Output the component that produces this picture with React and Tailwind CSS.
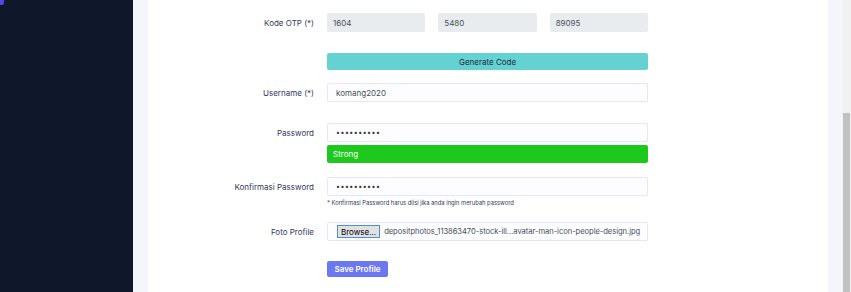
const FONT = "font-['Inter','Liberation_Sans',sans-serif]"

function Row({ label, className = '', children }) {
  return (
    <div className={`flex items-start ${className}`}>
      <div className="flex h-[19px] w-[166px] shrink-0 items-center justify-end text-[8px] text-[#34395e]">{label}</div>
      <div className="ml-[13px] w-[321px]">{children}</div>
    </div>
  )
}

function TextBox({ value, dots }) {
  return (
    <div className="flex h-[19px] items-center rounded-[2px] border border-[#e4e6fc] bg-[#fdfdff] pl-[8px] text-[8px] text-[#495057]">
      {dots ? <span className="text-[7px] leading-none tracking-[0.5px] text-[#333]">{value}</span> : value}
    </div>
  )
}

export default function App() {
  return (
    <div className={`flex h-[292px] w-[851px] overflow-hidden ${FONT}`}>
      {/* sidebar */}
      <div className="relative w-[133px] shrink-0 bg-[#0f172a]">
        <div className="absolute left-0 top-0 h-[5px] w-[4px] rounded-br-[2px] bg-[#4f46e5]" />
      </div>

      {/* main */}
      <div className="flex flex-1 bg-[#f4f6f9] pl-[15px] pr-[14px]">
        <div className="flex-1 bg-white pt-[13px]">
          <Row label="Kode OTP (*)">
            <div className="flex gap-[13px]">
              {['1604', '5480', '89095'].map((c) => (
                <div key={c} className="flex h-[19px] flex-1 items-center rounded-[2px] bg-[#e9ecef] pl-[6px] text-[8px] text-[#495057]">
                  {c}
                </div>
              ))}
            </div>
          </Row>

          <Row label="" className="mt-[21px]">
            <div className="flex h-[17px] items-center justify-center rounded-[2px] bg-[#64d2d2] text-[8px] text-[#1f2937]">
              Generate Code
            </div>
          </Row>

          <Row label="Username (*)" className="mt-[11px]">
            <TextBox value="komang2020" />
          </Row>

          <Row label="Password" className="mt-[21px]">
            <TextBox value="••••••••••" dots />
            <div className="mt-[3px] flex h-[18px] items-center rounded-[2px] bg-[#1ec91e] pl-[6px] text-[8px] text-white">
              Strong
            </div>
          </Row>

          <Row label="Konfirmasi Password" className="mt-[14px]">
            <TextBox value="••••••••••" dots />
            <div className="mt-[3px] whitespace-nowrap text-[5.8px] leading-[8px] text-[#34395e]">
              * Konfirmasi Password harus diisi jika anda ingin merubah password
            </div>
          </Row>

          <Row label="Foto Profile" className="mt-[15px]">
            <div className="flex h-[19px] items-center overflow-hidden whitespace-nowrap rounded-[2px] border border-[#e4e6fc] bg-[#fdfdff] pl-[9px] text-[8px] text-[#495057]">
              <span className="flex h-[13px] shrink-0 items-center border border-[#4a90d9] bg-[#e1e1e1] px-[3px] text-[8px] text-black">
                Browse...
              </span>
              <span className="ml-[4px] text-[7.6px] tracking-[-0.05px]">
                depositphotos_113863470-stock-ill...avatar-man-icon-people-design.jpg
              </span>
            </div>
          </Row>

          <Row label="" className="mt-[20px]">
            <div className="flex h-[16px] w-[61px] items-center justify-center rounded-[2px] bg-[#6c78ef] text-[8px] font-semibold text-white">
              Save Profile
            </div>
          </Row>
        </div>
      </div>

      {/* scrollbar */}
      <div className="flex w-[9px] shrink-0 flex-col bg-[#f1f1f1] pt-[113px]">
        <div className="mx-[1px] flex-1 bg-[#c1c1c1]" />
      </div>
    </div>
  )
}
